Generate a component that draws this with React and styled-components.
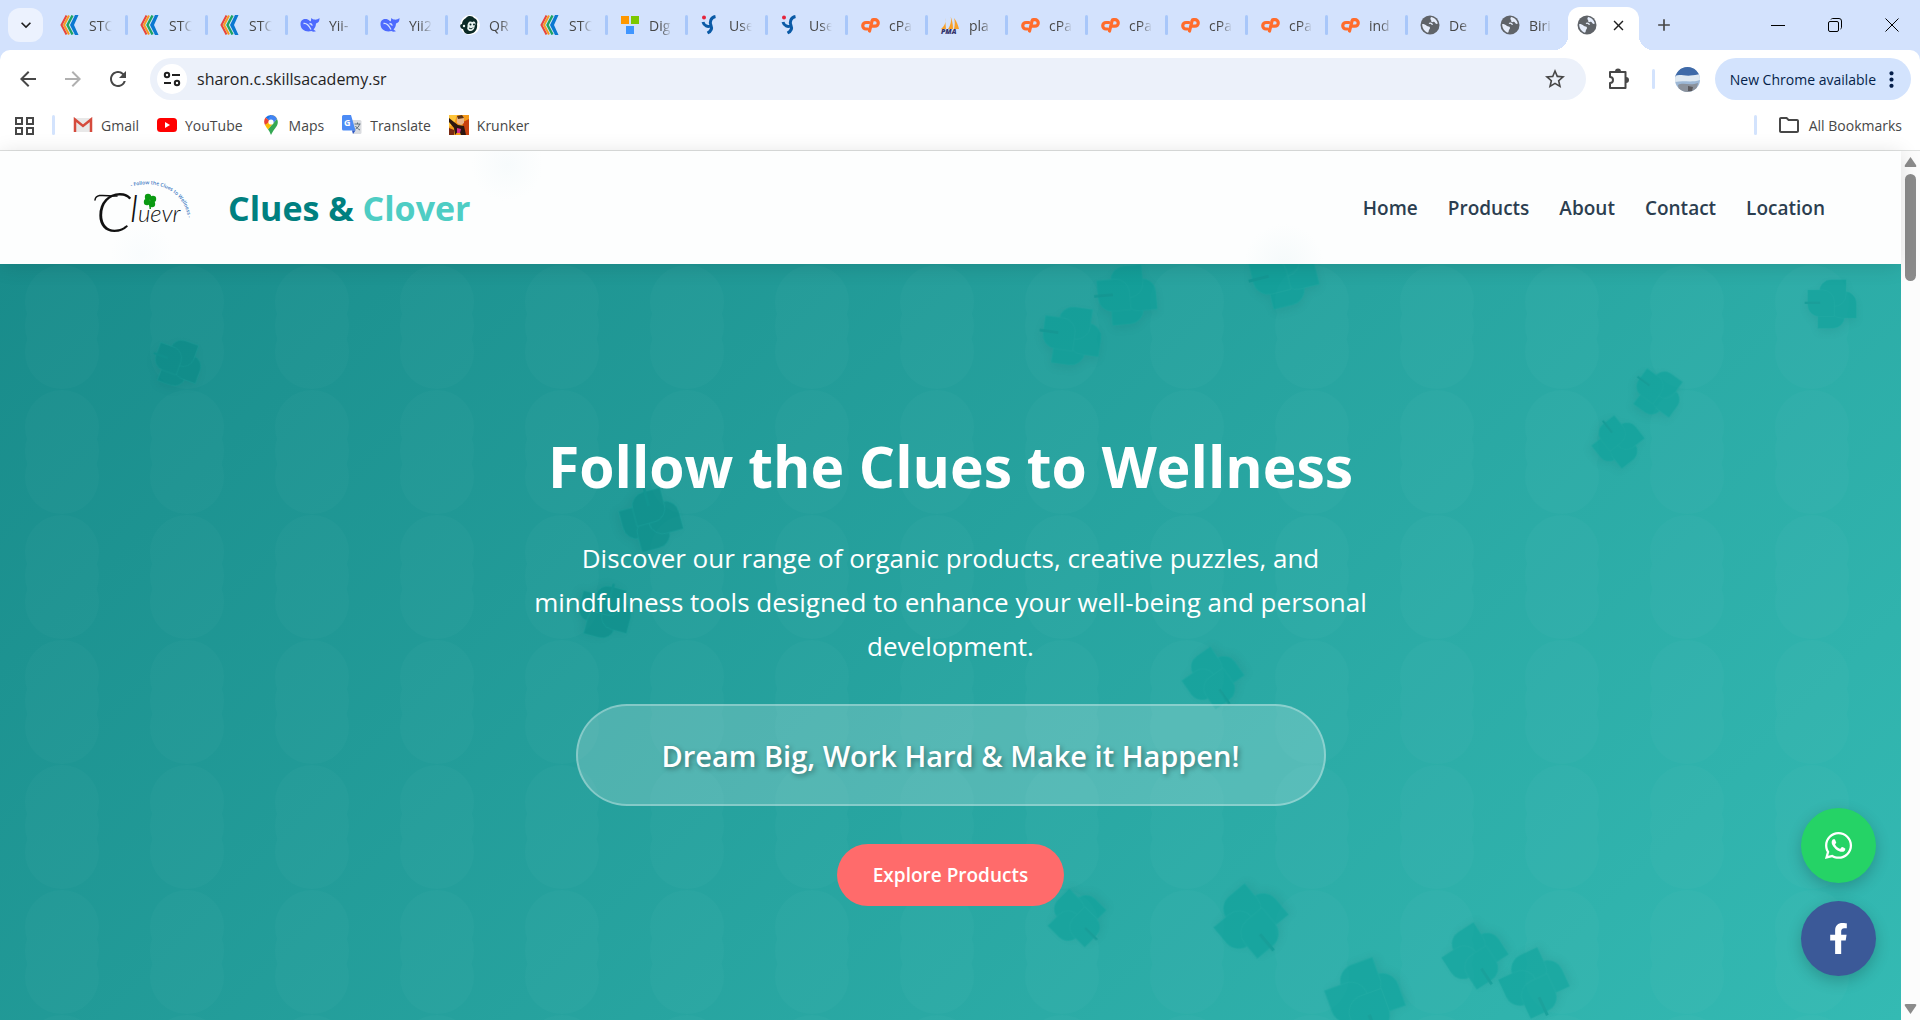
import React from "react";
import styled, { createGlobalStyle } from "styled-components";
import {
  MdArrowBack,
  MdArrowForward,
  MdRefresh,
  MdStarBorder,
  MdMoreVert,
  MdOutlineFolder,
  MdClose,
  MdAdd,
  MdKeyboardArrowDown,
} from "react-icons/md";
import { FaWhatsapp, FaFacebookF } from "react-icons/fa";

const GlobalStyle = createGlobalStyle`
  * {
    box-sizing: border-box;
  }
  body {
    margin: 0;
    font-family: "Open Sans", "Noto Sans", sans-serif;
    overflow: hidden;
  }
  button, input {
    font-family: inherit;
    border: none;
    background: none;
    padding: 0;
    margin: 0;
  }
  a {
    color: inherit;
    text-decoration: none;
  }
  svg {
    display: block;
    flex: none;
  }
`;

const Window = styled.div`
  display: flex;
  flex-direction: column;
  height: 100vh;
  background: #d3e2fd;
`;

/* browser chrome */

const TabStrip = styled.div`
  display: flex;
  align-items: center;
  height: 50px;
  padding-left: 8px;
`;
const TabSearch = styled.button`
  width: 35px;
  height: 34px;
  border-radius: 12px;
  background: #ecf2fe;
  display: flex;
  align-items: center;
  justify-content: center;
  font-size: 20px;
  color: #1f1f1f;
  margin-right: 3px;
`;
const Tab = styled.button`
  flex: 0 1 80px;
  min-width: 0;
  height: 34px;
  display: flex;
  align-items: center;
  gap: 9px;
  padding-left: 14px;
  position: relative;
  &::after {
    content: "";
    position: absolute;
    right: -2px;
    top: 7px;
    width: 3px;
    height: 20px;
    border-radius: 2px;
    background: ${(props) => (props.$last ? "transparent" : "#a8c7fa")};
  }
`;
const TabLabel = styled.span`
  width: 23px;
  overflow: hidden;
  white-space: nowrap;
  text-align: left;
  font-size: 14px;
  color: #474747;
  mask-image: linear-gradient(90deg, #000 50%, transparent);
`;
const ActiveTab = styled.div`
  align-self: flex-end;
  width: 71px;
  height: 43px;
  margin-left: 2px;
  background: #fff;
  border-radius: 12px 12px 0 0;
  display: flex;
  align-items: center;
  justify-content: space-between;
  padding: 0 12px 7px 9px;
  position: relative;
  color: #1f1f1f;
  &::before,
  &::after {
    content: "";
    position: absolute;
    bottom: 0;
    width: 14px;
    height: 14px;
  }
  &::before {
    right: 100%;
    background: radial-gradient(circle at 0 0, transparent 14px, #fff 14px);
  }
  &::after {
    left: 100%;
    background: radial-gradient(circle at 100% 0, transparent 14px, #fff 14px);
  }
`;
const IconButton = styled.button`
  display: flex;
  align-items: center;
  justify-content: center;
  width: ${(props) => props.$w || 45}px;
  height: 34px;
  font-size: ${(props) => props.$size || 24}px;
  color: ${(props) => props.$color || "#474747"};
`;
const WindowControls = styled.div`
  display: flex;
  margin-left: auto;
`;
const Toolbar = styled.div`
  display: flex;
  align-items: center;
  height: 58px;
  padding: 0 9px 0 5px;
  background: #fff;
  border-radius: 10px 10px 0 0;
`;
const AddressBar = styled.div`
  flex: 1;
  display: flex;
  align-items: center;
  height: 42px;
  margin-left: 10px;
  padding: 0 8px 0 7px;
  border-radius: 21px;
  background: #ecf1fa;
`;
const SiteInfo = styled.button`
  width: 30px;
  height: 30px;
  border-radius: 50%;
  background: #fff;
  display: flex;
  align-items: center;
  justify-content: center;
`;
const UrlInput = styled.input`
  flex: 1;
  margin-left: 10px;
  font-size: 16px;
  color: #1f1f1f;
  outline: none;
`;
const Divider = styled.span`
  width: 3px;
  height: 20px;
  border-radius: 2px;
  background: #d3e3fd;
`;
const Avatar = styled.button`
  margin: 0 15px 0 20px;
  border-radius: 50%;
  overflow: hidden;
`;
const UpdateButton = styled.button`
  display: flex;
  align-items: center;
  gap: 3px;
  height: 42px;
  padding: 0 7px 0 15px;
  border-radius: 21px;
  background: #d3e3fd;
  color: #041e49;
  font-size: 14px;
  font-weight: 500;
  white-space: nowrap;
`;
const BookmarksBar = styled.nav`
  display: flex;
  align-items: center;
  gap: 18px;
  height: 43px;
  padding: 0 18px 8px 15px;
  background: #fff;
  border-bottom: 1px solid #dfe1e0;
  font-size: 14px;
  color: #474747;
`;
const Bookmark = styled.a`
  display: flex;
  align-items: center;
  gap: 8px;
  white-space: nowrap;
`;
const RightBookmarks = styled.div`
  display: flex;
  align-items: center;
  gap: 20px;
  margin-left: auto;
`;

/* web page */

const Viewport = styled.div`
  flex: 1;
  min-height: 0;
  display: flex;
  background: #fcfcfc;
`;
const Page = styled.div`
  flex: 1;
  min-width: 0;
  display: flex;
  flex-direction: column;
`;
const Header = styled.header`
  position: relative;
  z-index: 2;
  display: flex;
  align-items: center;
  justify-content: space-between;
  height: 113px;
  padding: 0 4%;
  background:
    radial-gradient(circle at 507px 14px, #f7fbfc, transparent 36px),
    radial-gradient(circle at 142px 104px, #f9fcfd, transparent 32px),
    radial-gradient(circle at 1284px 113px, #f5fafb, transparent 40px),
    #fdfefe;
  box-shadow: 0 2px 20px rgba(0, 0, 0, 0.12);
`;
const Brand = styled.a`
  display: flex;
  align-items: center;
  gap: 20px;
`;
const BrandName = styled.span`
  font-size: 34px;
  font-weight: 700;
  line-height: 48px;
  color: #008080;
  span {
    color: #4ecdc4;
  }
`;
const Menu = styled.nav`
  display: flex;
  gap: 30px;
  font-size: 19px;
  font-weight: 600;
  color: #2c3e50;
`;
const Hero = styled.main`
  flex: 1;
  position: relative;
  overflow: hidden;
  display: flex;
  flex-direction: column;
  align-items: center;
  padding-top: 160px;
  text-align: center;
  color: #fff;
  background: linear-gradient(135deg, #198c8b, #34bab3);
`;
const Pattern = styled.svg`
  position: absolute;
  inset: 0;
  width: 100%;
  height: 100%;
`;
const CloverBox = styled.svg`
  position: absolute;
  left: ${(props) => props.$x}px;
  top: ${(props) => props.$y}px;
  width: ${(props) => props.$size}px;
  height: ${(props) => props.$size}px;
  transform: translate(-50%, -50%) rotate(${(props) => props.$turn}deg);
  color: ${(props) => props.$tone};
  opacity: 0.45;
  overflow: visible;
  filter: drop-shadow(0 4px 4px rgba(0, 80, 80, 0.2));
`;
const Title = styled.h1`
  position: relative;
  margin: 0 0 28px;
  font-size: 57px;
  font-weight: 700;
  line-height: 84px;
`;
const Lead = styled.p`
  position: relative;
  max-width: 880px;
  margin: 0 0 36px;
  padding: 0 10px;
  font-size: 26px;
  line-height: 44px;
`;
const Tagline = styled.p`
  position: relative;
  display: flex;
  align-items: center;
  justify-content: center;
  width: 750px;
  max-width: 90%;
  height: 102px;
  margin: 0 0 38px;
  border: 2px solid rgba(255, 255, 255, 0.3);
  border-radius: 51px;
  background: rgba(255, 255, 255, 0.2);
  font-size: 29px;
  font-weight: 600;
  text-shadow: 2px 2px 5px rgba(0, 0, 0, 0.35);
`;
const Explore = styled.a`
  position: relative;
  padding: 0 36px;
  border-radius: 31px;
  background: #ff6b6b;
  font-size: 19px;
  font-weight: 600;
  line-height: 62px;
`;
const Social = styled.div`
  position: absolute;
  right: 25px;
  bottom: 44px;
  display: flex;
  flex-direction: column;
  gap: 18px;
`;
const SocialLink = styled.a`
  width: 75px;
  height: 75px;
  border-radius: 50%;
  display: flex;
  align-items: center;
  justify-content: center;
  font-size: 31px;
  background: ${(props) => props.$bg};
  box-shadow: 0 5px 15px rgba(0, 0, 0, 0.2);
`;
const Scrollbar = styled.div`
  width: 19px;
  display: flex;
  flex-direction: column;
  align-items: center;
  padding: 6px 0;
`;
const Thumb = styled.div`
  width: 11px;
  height: 107px;
  margin: 7px 0 auto;
  border-radius: 6px;
  background: #8b8b8b;
`;

/* favicons */

const ChevronsIcon = () => (
  <svg width="20" height="20" viewBox="0 0 20 20" fill="none" strokeWidth="2">
    <path d="M6.500.5L1.500 10l5 9.500" stroke="#e8453c" />
    <path d="M9 .5L4 10l5 9.500" stroke="#f59b23" />
    <path d="M12.500.5l-5 9.500 5 9.500" stroke="#1fa463" strokeWidth="2.400" />
    <path d="M18.500 0H15l-5 10 5 10h3.500L14 10z" fill="#0b78d0" />
  </svg>
);

const WhaleIcon = () => (
  <svg width="20" height="20" viewBox="0 0 20 20">
    <path
      d="M.5 9C.5 5 3.500 3.500 6.500 4c2 .3 2.500 1.500 4 2.500 1-1 .2-2.500 1-3.500.8 1.500 2 1.500 3.200 1.600C16.500 4.800 18 4 19.500 3c.2 3-1 5-3.500 5.500-.2 3-1 4.500-2.500 6l2.500 1.800c-2 .8-3.500.5-4.500-.3C6 17.500.5 15 .5 9z"
      fill="#4d6bfe"
    />
    <path d="M3.500 8.500c3-.5 5.500 2 7.500 6M9.500 8.500c1.500 0 2.500 1 2.800 2.200" stroke="#d3e2fd" strokeWidth="1.3" fill="none" />
  </svg>
);

const MonkeyIcon = () => (
  <svg width="20" height="20" viewBox="0 0 20 20">
    <circle cx="10" cy="10" r="10" fill="#fff" />
    <path d="M6 3c2-3 7-2 8 0 3 1 4 4 3 6 1 6-3 10-8 10-4 0-5-2-6-5-3 0-4-5-1-5 0-3 2-5 4-6z" fill="#0b2a26" />
    <path d="M9 7c1.500-1 2.500 0 3.500 0 2-1 3 0 3 2l-1 3c0 2-2 4-4 4s-4-2-3-4c0-2 0-4 1.500-5z" fill="#e9f3ef" />
    <circle cx="4" cy="11" r="1.200" fill="#e9f3ef" />
    <circle cx="10.500" cy="9.500" r="1" fill="#0b2a26" />
    <circle cx="14" cy="9.500" r="1" fill="#0b2a26" />
    <path d="M9 13c1.500 1 3 1 4-.5" stroke="#0b2a26" fill="none" />
  </svg>
);

const SquaresIcon = () => (
  <svg width="20" height="20" viewBox="0 0 20 20">
    <path d="M1 1h8v8H1z" fill="#ff9800" />
    <path d="M11 1h8v8h-8z" fill="#7cc800" />
    <path d="M6 11h8v8H6z" fill="#4096ff" />
  </svg>
);

const SproutIcon = () => (
  <svg width="20" height="20" viewBox="0 0 20 20" fill="none">
    <circle cx="4" cy="2.500" r="2" fill="#e5243b" />
    <path d="M3 7C4 11 8 12 10 11M15.500 1.500c-5 1-6 5.500-4.500 9s-.5 6-3.500 7.500" stroke="#0a5aa6" strokeWidth="3" />
  </svg>
);

const SailsIcon = () => (
  <svg width="20" height="20" viewBox="0 0 20 20">
    <path d="M5 3c1 4 0 8-4 11h5zM10 0c2 4 1 10-2 14h5c0-5-1-10-3-14zM14 3c3 4 4 7 5 11h-5c1-4 1-8 0-11z" fill="#f8a22b" />
    <text x="1" y="19" fontSize="7" fontWeight="800" fontStyle="italic" fill="#33336b">
      PMA
    </text>
  </svg>
);

const CpanelIcon = () => (
  <svg width="20" height="20" viewBox="0 0 20 20" fill="none" stroke="#ff6c2c" strokeWidth="3.200">
    <path d="M9 7.500H6a3.200 3.200 0 0 0 0 6.500h1.500" strokeLinecap="round" />
    <path d="M9.500 16l2.700-10.500a1 1 0 0 1 1-.8h1.800a3 3 0 0 1 0 6.500h-2" strokeLinecap="round" />
  </svg>
);

const GlobeIcon = () => (
  <svg width="20" height="20" viewBox="0 0 20 20">
    <circle cx="10" cy="10" r="9.500" fill="#5f6368" />
    <path
      d="M11 2c3 .3 6 3 6.800 6.500-1 .8-2.300.5-2.800-.7-.3-1-1.200-1.300-2-.8-1 .5-2-.2-1.800-1.300.2-.9-1-1.200-.8-2.200zM2.200 9c2 0 3.300.6 4.500 1.800 1 .9 3 .4 3.300 1.900.3 1.300-1.300 1.700-1.200 3 0 .8-.3 1.500-.8 2C4.500 16.500 2 13.300 2.200 9z"
      fill="#e6edfb"
    />
    <path d="M9 8.500c1.500-.8 3 0 3.500 1.200" stroke="#e6edfb" strokeWidth="1.300" fill="none" />
  </svg>
);

const GmailIcon = () => (
  <svg width="20" height="16" viewBox="0 0 20 16">
    <path d="M1 1h18v14H1z" fill="#e8e8e8" />
    <path d="M2 15V2.500l8 6.500 8-6.500V15" stroke="#d54b3d" strokeWidth="2.500" fill="none" />
  </svg>
);

const YoutubeIcon = () => (
  <svg width="20" height="14" viewBox="0 0 20 14">
    <rect width="20" height="14" rx="3.500" fill="#f00" />
    <path d="M8 4l5 3-5 3z" fill="#fff" />
  </svg>
);

const MapsIcon = () => (
  <svg width="20" height="20" viewBox="-3 0 20 20">
    <path d="M7 0a7 7 0 0 0-5.400 2.500L7 7z" fill="#1a73e8" />
    <path d="M1.600 2.500C-.5 5 0 8 1 10l6-3z" fill="#ea4335" />
    <path d="M1 10c1 2 2 3 3 4.500L13 4C12 1.500 9.500 0 7 0l3 3z" fill="#fbbc04" />
    <path d="M13 4c2 4 0 7-2 9.500C9 16 8 18 7 20c-1-2-1.500-4-3-5.500z" fill="#34a853" />
    <path d="M7 0c2.600 0 5 1.500 6 4L9.500 8 4 4z" fill="#4285f4" />
    <circle cx="7" cy="7" r="2.600" fill="#fff" />
  </svg>
);

const TranslateIcon = () => (
  <svg width="20" height="20" viewBox="0 0 20 20">
    <path d="M9 5h9a1.500 1.500 0 0 1 1.500 1.500v11A1.500 1.500 0 0 1 18 19h-7z" fill="#dadce0" />
    <path d="M1.500 0H9l4.500 15.500H1.500A1.500 1.500 0 0 1 0 14V1.500A1.500 1.500 0 0 1 1.500 0z" fill="#4c8bf5" />
    <path d="M13.500 15.500L11 19l-1-3.500z" fill="#2c56c4" />
    <path d="M12.500 9h6M15.500 7.500V9m2 0c-.5 2.500-2 4-4 5m0-3c1 1.500 2.500 3 4.500 4" stroke="#5f6f78" fill="none" />
    <text x="2" y="11" fontSize="9" fontWeight="700" fill="#fff">
      G
    </text>
  </svg>
);

const KrunkerIcon = () => (
  <svg width="20" height="20" viewBox="0 0 20 20">
    <path d="M0 0h20v20H0z" fill="#f59a1b" />
    <path d="M0 0h8L5 9l-5 3z" fill="#ffc53a" />
    <path d="M14 7l6-3v16h-7z" fill="#c8410f" />
    <path d="M8 2l4-1 3 2v5l-3 2-4-2z" fill="#e8b48a" />
    <path d="M8 1l5-1 2 3-6 1z" fill="#5b3217" />
    <path d="M0 3l5 4 4 3 6 1 2 9h-5l-2-5-4 5-1-7-5-6z" fill="#2b1610" />
    <path d="M8 13l4 1-1 4h-3z" fill="#d8308c" />
    <path d="M0 13l5 2v5H0z" fill="#7a2a12" />
  </svg>
);

const TuneIcon = () => (
  <svg width="18" height="18" viewBox="0 0 18 18" fill="none" stroke="#1f1f1f" strokeWidth="2">
    <circle cx="4" cy="5" r="2.200" />
    <path d="M9 5h8M1 13h7" />
    <circle cx="14" cy="13" r="2.200" />
  </svg>
);

const PuzzleIcon = () => (
  <svg width="22" height="22" viewBox="0 0 22 22" fill="none" stroke="#474747" strokeWidth="2" strokeLinejoin="round">
    <path d="M2 4h15.500v16H2v-5a3 3 0 0 0 0-6z" />
    <path d="M8 3.500a2 2 0 0 1 4 0zM18 10a2 2 0 0 1 0 4z" fill="#474747" />
  </svg>
);

const AppsIcon = () => (
  <svg width="19" height="19" viewBox="0 0 19 19" fill="none" stroke="#474747" strokeWidth="2">
    <path d="M1 2h6v6H1zM12 2h6v6h-6zM1 12h6v6H1zM12 12h6v6h-6z" />
  </svg>
);

const SkyAvatar = () => (
  <svg width="25" height="25" viewBox="0 0 25 25">
    <path d="M0 0h25v25H0z" fill="#9db8d6" />
    <path d="M0 0h25v8L0 10z" fill="#3f6aa8" />
    <path d="M0 9c6-3 10 2 25-2v6c-9 3-16 0-25 2z" fill="#dfe9f2" />
    <path d="M3 18c5-3 12 1 20-2l-2 9H4z" fill="#8b929c" />
    <path d="M13 19l5 1-1 4h-4z" fill="#5b5a5e" />
  </svg>
);

const LogoMark = () => (
  <svg width="132" height="80" viewBox="0 0 132 80" role="img" aria-label="Cluevr">
    <defs>
      <path id="arc" d="M55 19C86 9 111 28 112 52" />
    </defs>
    <text fontFamily="Lato" fontStyle="italic" fontWeight="300" fill="#111">
      <tspan x="20" y="64" fontSize="56">
        C
      </tspan>
      <tspan x="54" y="54" fontSize="38">
        l
      </tspan>
      <tspan fontSize="24">uevr</tspan>
    </text>
    <path d="M19 32c1-8 14-3 22-4" stroke="#111" strokeWidth="1.500" fill="none" strokeLinecap="round" />
    <text fontSize="5" fontWeight="600" fill="#3b78c2">
      <textPath href="#arc">- Follow the Clues to Wellness -</textPath>
    </text>
    <g fill="#0a9a12">
      <circle cx="72" cy="29" r="3.200" />
      <circle cx="77" cy="31" r="3.200" />
      <circle cx="71" cy="34" r="3.200" />
      <circle cx="76" cy="36" r="3.200" />
      <path d="M73 33l1.500 0 .5 8-1.500 0z" />
    </g>
  </svg>
);

const leaf = "M1 14h19a15 15 0 0 1 15 15v19H16A15 15 0 0 1 1 33z";

const Clover = ({ x, y, size, turn }) => (
  <CloverBox
    $x={x}
    $y={y}
    $size={size}
    $turn={turn}
    $tone={x < 1000 ? "#008682" : "#009c95"}
    viewBox="0 0 64 64"
    fill="currentColor"
    stroke="#14a79f"
    strokeWidth="0.6"
  >
    <path d={leaf} transform="rotate(270 32 32)" />
    <path d={leaf} transform="rotate(180 32 32)" />
    <path d={leaf} transform="rotate(90 32 32)" />
    <path d={leaf} />
    <path d="M-3 29h20v3H-3z" fill="#008d88" stroke="none" />
  </CloverBox>
);

const tabs = [
  [ChevronsIcon, "STC"],
  [ChevronsIcon, "STC"],
  [ChevronsIcon, "STC"],
  [WhaleIcon, "Yii-"],
  [WhaleIcon, "Yii2"],
  [MonkeyIcon, "QR"],
  [ChevronsIcon, "STC"],
  [SquaresIcon, "Dig"],
  [SproutIcon, "Use"],
  [SproutIcon, "Use"],
  [CpanelIcon, "cPa"],
  [SailsIcon, "pla"],
  [CpanelIcon, "cPa"],
  [CpanelIcon, "cPa"],
  [CpanelIcon, "cPa"],
  [CpanelIcon, "cPa"],
  [CpanelIcon, "ind"],
  [GlobeIcon, "De"],
  [GlobeIcon, "Biri"],
];

const bookmarks = [
  [GmailIcon, "Gmail"],
  [YoutubeIcon, "YouTube"],
  [MapsIcon, "Maps"],
  [TranslateIcon, "Translate"],
  [KrunkerIcon, "Krunker"],
];

const clovers = [
  { x: 178, y: 99, size: 48, turn: 20 },
  { x: 1127, y: 31, size: 60, turn: -5 },
  { x: 1072, y: 72, size: 60, turn: 8 },
  { x: 1284, y: 10, size: 66, turn: -14 },
  { x: 1832, y: 40, size: 50, turn: 0 },
  { x: 1658, y: 129, size: 48, turn: 36 },
  { x: 1618, y: 178, size: 48, turn: 52 },
  { x: 651, y: 256, size: 60, turn: 75 },
  { x: 605, y: 348, size: 54, turn: 105 },
  { x: 1213, y: 414, size: 56, turn: 235 },
  { x: 1077, y: 654, size: 54, turn: 225 },
  { x: 1251, y: 657, size: 68, turn: 230 },
  { x: 1475, y: 692, size: 60, turn: 237 },
  { x: 1534, y: 719, size: 64, turn: 245 },
  { x: 1365, y: 734, size: 74, turn: 250 },
];

const App = () => {
  return (
    <Window>
      <GlobalStyle />
      <TabStrip>
        <TabSearch aria-label="Search tabs">
          <MdKeyboardArrowDown />
        </TabSearch>
        {tabs.map(([Icon, label], i) => (
          <Tab key={i} $last={i === tabs.length - 1}>
            <Icon />
            <TabLabel>{label}</TabLabel>
          </Tab>
        ))}
        <ActiveTab>
          <GlobeIcon />
          <MdClose size={17} />
        </ActiveTab>
        <IconButton $w={50} $size={20} aria-label="New tab">
          <MdAdd />
        </IconButton>
        <WindowControls>
          <IconButton $w={57} aria-label="Minimize">
            <svg width="14" height="14" stroke="#000">
              <path d="M0 7.500h14" />
            </svg>
          </IconButton>
          <IconButton $w={57} aria-label="Restore">
            <svg width="14" height="14" stroke="#000" fill="none">
              <rect x="0.500" y="3.500" width="10" height="10" rx="1.500" />
              <path d="M3 1.500q.5-1 1.500-1H11Q13.500.5 13.500 3v6.500q0 1-1 1.500" />
            </svg>
          </IconButton>
          <IconButton $w={57} aria-label="Close">
            <svg width="14" height="14" stroke="#000">
              <path d="M.5.5l13 13M13.500.5l-13 13" />
            </svg>
          </IconButton>
        </WindowControls>
      </TabStrip>
      <Toolbar>
        <IconButton aria-label="Back">
          <MdArrowBack />
        </IconButton>
        <IconButton $color="#b0b0b0" aria-label="Forward">
          <MdArrowForward />
        </IconButton>
        <IconButton aria-label="Reload">
          <MdRefresh />
        </IconButton>
        <AddressBar>
          <SiteInfo aria-label="Site information">
            <TuneIcon />
          </SiteInfo>
          <UrlInput aria-label="Address" defaultValue="sharon.c.skillsacademy.sr" />
          <IconButton aria-label="Bookmark this page">
            <MdStarBorder />
          </IconButton>
        </AddressBar>
        <IconButton $w={66} aria-label="Extensions">
          <PuzzleIcon />
        </IconButton>
        <Divider />
        <Avatar aria-label="Profile">
          <SkyAvatar />
        </Avatar>
        <UpdateButton>
          New Chrome available
          <MdMoreVert size={25} />
        </UpdateButton>
      </Toolbar>
      <BookmarksBar>
        <AppsIcon />
        <Divider />
        {bookmarks.map(([Icon, label]) => (
          <Bookmark href="#" key={label}>
            <Icon />
            {label}
          </Bookmark>
        ))}
        <RightBookmarks>
          <Divider />
          <Bookmark href="#">
            <MdOutlineFolder size={24} />
            All Bookmarks
          </Bookmark>
        </RightBookmarks>
      </BookmarksBar>
      <Viewport>
        <Page>
          <Header>
            <Brand href="#">
              <LogoMark />
              <BrandName>
                Clues &amp; <span>Clover</span>
              </BrandName>
            </Brand>
            <Menu>
              <a href="#">Home</a>
              <a href="#">Products</a>
              <a href="#">About</a>
              <a href="#">Contact</a>
              <a href="#">Location</a>
            </Menu>
          </Header>
          <Hero>
            <Pattern aria-hidden="true">
              <defs>
                <pattern id="pills" width="125" height="125" patternUnits="userSpaceOnUse">
                  <g fill="#fff">
                    <circle cx="62" cy="38" r="37" />
                    <circle cx="62" cy="62" r="37" />
                    <circle cx="62" cy="88" r="37" />
                  </g>
                </pattern>
              </defs>
              <rect width="100%" height="100%" fill="url(#pills)" opacity="0.018" />
            </Pattern>
            {clovers.map((clover) => (
              <Clover key={clover.x} {...clover} />
            ))}
            <Title>Follow the Clues to Wellness</Title>
            <Lead>
              Discover our range of organic products, creative puzzles, and
              mindfulness tools designed to enhance your well-being and personal
              development.
            </Lead>
            <Tagline>Dream Big, Work Hard &amp; Make it Happen!</Tagline>
            <Explore href="#">Explore Products</Explore>
            <Social>
              <SocialLink href="#" $bg="#25d366" aria-label="WhatsApp">
                <FaWhatsapp />
              </SocialLink>
              <SocialLink href="#" $bg="#3b5998" aria-label="Facebook">
                <FaFacebookF />
              </SocialLink>
            </Social>
          </Hero>
        </Page>
        <Scrollbar>
          <svg width="13" height="10" fill="#8b8b8b">
            <path d="M6.500 0L12 8q1 2-1 2H2q-2 0-1-2z" />
          </svg>
          <Thumb />
          <svg width="13" height="10" fill="#8b8b8b">
            <path d="M6.500 10L12 2q1-2-1-2H2Q0 0 1 2z" />
          </svg>
        </Scrollbar>
      </Viewport>
    </Window>
  );
};

export default App;
